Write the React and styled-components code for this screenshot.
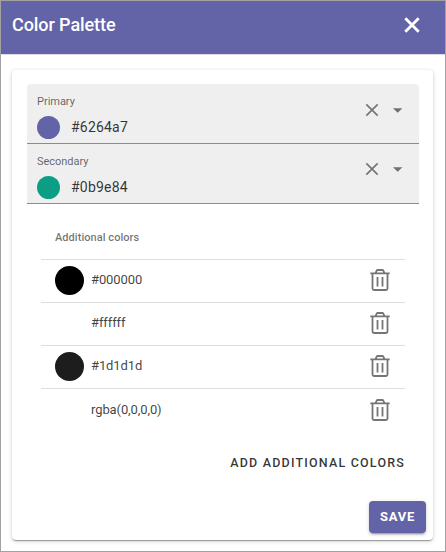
import React from "react";
import styled, { createGlobalStyle } from "styled-components";

const GlobalStyle = createGlobalStyle`
  *, *::before, *::after { box-sizing: border-box; }
  body { margin: 0; font-family: Roboto, sans-serif; color: rgba(0, 0, 0, 0.87); background: #fff; }
`;

const Dialog = styled.main`
  width: 446px;
  height: 552px;
  border: 1px solid #a2a2a2;
  background: #fff;
  overflow: hidden;
`;

const Header = styled.header`
  display: flex;
  justify-content: space-between;
  height: 54px;
  padding: 0 25px 0 11px;
  background: #6264a7;
  border-bottom: 1px solid #dcdce4;
  color: #fff;
`;

const Title = styled.h1`
  margin: 12px 0 0;
  font-size: 18px;
  font-weight: 500;
  line-height: 24px;
  letter-spacing: -0.08px;
`;

const IconButton = styled.button`
  display: flex;
  padding: 0;
  border: 0;
  background: none;
  color: ${(p) => p.$color || "#757575"};
  margin-top: ${(p) => p.$top || 0}px;
  height: max-content;
`;

const Card = styled.section`
  display: flex;
  flex-direction: column;
  width: 421px;
  height: 470px;
  margin: 15px 0 0 11px;
  padding: 14px 7px 7px 15px;
  border-radius: 4px;
  background: #fff;
  box-shadow: 0 2px 1px -1px rgba(0, 0, 0, 0.2), 0 1px 1px rgba(0, 0, 0, 0.14),
    0 1px 4px rgba(0, 0, 0, 0.2);
`;

const Fields = styled.div`
  width: 392px;
  border-radius: 4px 4px 0 0;
  overflow: hidden;
`;

const Field = styled.div`
  display: flex;
  justify-content: space-between;
  height: 60px;
  padding: 0 16px 0 10px;
  background: #efefef;
  border-bottom: 1px solid #8c8c8c;
`;

const Label = styled.div`
  margin-top: 11px;
  font-size: 11px;
  line-height: 14px;
  letter-spacing: -0.02px;
  color: rgba(0, 0, 0, 0.6);
`;

const Value = styled.div`
  display: flex;
  align-items: center;
  gap: 11px;
  height: 23px;
  margin-top: 7px;
  font-size: 14px;
  line-height: 23px;
  letter-spacing: 0.2px;
  color: rgba(0, 0, 0, 0.8);
`;

const ValueText = styled.span`
  height: 24px;
`;

const Swatch = styled.span`
  flex: none;
  width: ${(p) => p.$size}px;
  height: ${(p) => p.$size}px;
  border-radius: 50%;
  background: ${(p) => p.$color};
`;

const Actions = styled.div`
  display: flex;
  align-items: center;
  gap: 14px;
  height: 14px;
  margin-top: ${(p) => p.$top}px;
`;

const Table = styled.div`
  width: 364px;
  margin: 12px 0 0 14px;
`;

const TableHead = styled.div`
  height: 43px;
  padding-left: 14px;
  font-size: 11px;
  font-weight: 500;
  line-height: 43px;
  letter-spacing: 0.05px;
  color: rgba(0, 0, 0, 0.56);
`;

const Row = styled.div`
  display: flex;
  align-items: center;
  height: 43px;
  padding: 0 15px 1px 14px;
  border-top: 1px solid #dedede;
  font-size: 13px;
  letter-spacing: -0.1px;
`;

const ColorText = styled.span`
  flex: 1;
  margin-left: 7px;
  padding-bottom: ${(p) => p.$lift}px;
  color: rgba(0, 0, 0, 0.75);
`;

const RowAction = styled.div`
  padding-bottom: ${(p) => p.$lift}px;
`;

const AddButton = styled.button`
  align-self: flex-end;
  margin: 24px 21px 0 0;
  padding: 0;
  border: 0;
  background: none;
  font: 500 12.5px/16px Roboto, sans-serif;
  letter-spacing: 1.19px;
  color: rgba(0, 0, 0, 0.8);
`;

const SaveButton = styled.button`
  align-self: flex-end;
  width: 57px;
  height: 32px;
  margin-top: auto;
  padding: 0;
  border: 0;
  border-radius: 4px;
  background: #6264a7;
  color: #fff;
  font: 700 13px/32px Roboto, sans-serif;
  letter-spacing: 0.7px;
  box-shadow: 0 3px 1px -2px rgba(0, 0, 0, 0.2), 0 2px 2px rgba(0, 0, 0, 0.14),
    0 1px 5px rgba(0, 0, 0, 0.12);
`;

function Cross({ size, stroke }) {
  return (
    <svg width={size} height={size} viewBox={`0 0 ${size} ${size}`} fill="none" stroke="currentColor" strokeWidth={stroke}>
      <path d={`M1.3 1.3L${size - 1.3} ${size - 1.3}M${size - 1.3} 1.3L1.3 ${size - 1.3}`} />
    </svg>
  );
}

function Caret() {
  return (
    <svg width="10" height="5" viewBox="0 0 10 5" fill="#707070">
      <path d="M0 0.2H9.4L4.7 4.8Z" />
    </svg>
  );
}

function Trash() {
  return (
    <svg width="20" height="22" viewBox="0 0 20 22" fill="none" stroke="currentColor" strokeWidth="1.8">
      <path d="M0.3 4.3H19.7M5.6 4L6.7 1.7Q7 1 7.7 1H12.3Q13 1 13.3 1.7L14.4 4" />
      <path d="M2.5 4V19.5Q2.5 21 4 21H16Q17.5 21 17.5 19.5V4M7.5 8V17.5M12.5 8V17.5" />
    </svg>
  );
}

const fields = [
  { label: "Primary", color: "#6264a7", top: 19 },
  { label: "Secondary", color: "#0b9e84", top: 18 },
];

const colors = [
  { color: "#000000", lift: 2 },
  { color: "#ffffff", lift: 2 },
  { color: "#1d1d1d", lift: 2 },
  { color: "rgba(0,0,0,0)", lift: 0 },
];

export default function App() {
  return (
    <>
      <GlobalStyle />
      <Dialog>
        <Header>
          <Title>Color Palette</Title>
          <IconButton $color="#fff" $top={16} aria-label="Close">
            <Cross size={16} stroke={2.8} />
          </IconButton>
        </Header>
        <Card>
          <Fields>
            {fields.map(({ label, color, top }) => (
              <Field key={label}>
                <div>
                  <Label>{label}</Label>
                  <Value>
                    <Swatch $size={23} $color={color} />
                    <ValueText>{color}</ValueText>
                  </Value>
                </div>
                <Actions $top={top}>
                  <IconButton aria-label="Clear"><Cross size={14} stroke={1.7} /></IconButton>
                  <Caret />
                </Actions>
              </Field>
            ))}
          </Fields>
          <Table>
            <TableHead>Additional colors</TableHead>
            {colors.map(({ color, lift }) => (
              <Row key={color}>
                <Swatch $size={29} $color={color} />
                <ColorText $lift={lift}>{color}</ColorText>
                <RowAction $lift={lift}>
                  <IconButton aria-label="Delete"><Trash /></IconButton>
                </RowAction>
              </Row>
            ))}
          </Table>
          <AddButton>ADD ADDITIONAL COLORS</AddButton>
          <SaveButton>SAVE</SaveButton>
        </Card>
      </Dialog>
    </>
  );
}
